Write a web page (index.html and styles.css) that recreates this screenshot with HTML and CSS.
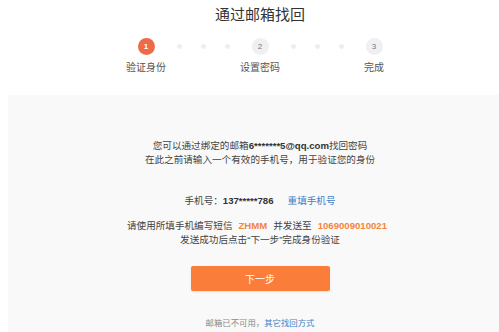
FILE: index.html
```html
<!DOCTYPE html>
<html lang="zh-CN">
<head>
  <meta charset="UTF-8" />
  <meta name="viewport" content="width=device-width, initial-scale=1.0" />
  <title>通过邮箱找回</title>
  <link rel="stylesheet" href="styles.css">
</head>
<body>
  <div class="page">
    <h1 class="title">通过邮箱找回</h1>

    <div class="steps">
      <div class="step active">
        <span class="num">1</span>
        <span class="label">验证身份</span>
      </div>
      <i class="dot"></i><i class="dot"></i><i class="dot"></i>
      <div class="step">
        <span class="num">2</span>
        <span class="label">设置密码</span>
      </div>
      <i class="dot"></i><i class="dot"></i><i class="dot"></i>
      <div class="step">
        <span class="num">3</span>
        <span class="label">完成</span>
      </div>
    </div>

    <div class="panel">
      <p class="intro">您可以通过绑定的邮箱<b>6*******5@qq.com</b>找回密码<br>在此之前请输入一个有效的手机号，用于验证您的身份</p>

      <p class="phone">手机号：<b>137*****786</b><a href="#" class="link">重填手机号</a></p>

      <p class="sms">请使用所填手机编写短信<b class="hl">ZHMM</b>并发送至<b class="hl">1069009010021</b><br>发送成功后点击“下一步”完成身份验证</p>

      <button class="button" type="button">下一步</button>

      <p class="other">邮箱已不可用，<a href="#" class="link">其它找回方式</a></p>
    </div>
  </div>
</body>
</html>
```

FILE: styles.css
```css
body {
  margin: 0;
  overflow: hidden;
  font-family: "Liberation Sans", "Noto Sans CJK SC", sans-serif;
  background: #fff;
  color: #444;
}
.page {
  width: 504px;
  margin-left: 8px;
}
.title {
  margin: 0;
  padding-top: 5px;
  font-size: 15px;
  line-height: 20px;
  font-weight: normal;
  text-align: center;
  color: #333;
}
.steps {
  display: flex;
  justify-content: center;
  align-items: flex-start;
  margin-top: 13px;
  height: 57px;
}
.step {
  display: flex;
  flex-direction: column;
  align-items: center;
  width: 17px;
}
.num {
  width: 17px;
  height: 17px;
  border-radius: 50%;
  background: #f0f0f4;
  color: #777;
  font-size: 8px;
  line-height: 17px;
  text-align: center;
}
.step.active .num {
  background: #ee6a48;
  color: #fff;
  font-weight: bold;
}
.label {
  margin-top: 6px;
  font-size: 10px;
  line-height: 14px;
  white-space: nowrap;
  color: #555;
}
.dot {
  width: 5px;
  height: 5px;
  margin: 6px 0 0 19px;
  border-radius: 50%;
  background: #eeeef3;
}
.step + .dot {
  margin-left: 22px;
}
.dot + .step {
  margin-left: 22px;
}
.panel {
  background: #f9f9f9;
  height: 240px;
  padding-top: 44px;
  box-sizing: border-box;
  text-align: center;
  font-size: 9.6px;
  line-height: 14px;
}
.panel p {
  margin: 0;
}
.intro b,
.phone b {
  color: #333;
}
.phone {
  margin-top: 27px !important;
}
.link {
  color: #3f7fc6;
  text-decoration: none;
  margin-left: 14px;
}
.sms {
  margin-top: 11px !important;
}
.hl {
  margin: 0 6px;
  color: #f4853e;
}
.button {
  display: block;
  width: 139px;
  height: 25px;
  margin: 19px auto 0;
  padding: 0;
  border: none;
  border-radius: 2px;
  background: #fb7d3a;
  box-shadow: 0 1px 2px rgba(0, 0, 0, 0.1);
  color: #fff;
  font-family: inherit;
  font-size: 10px;
  cursor: pointer;
}
.other {
  margin-top: 26px !important;
  font-size: 8.4px;
  line-height: 12px;
  color: #888;
}
.other .link {
  margin-left: 0;
}
```
